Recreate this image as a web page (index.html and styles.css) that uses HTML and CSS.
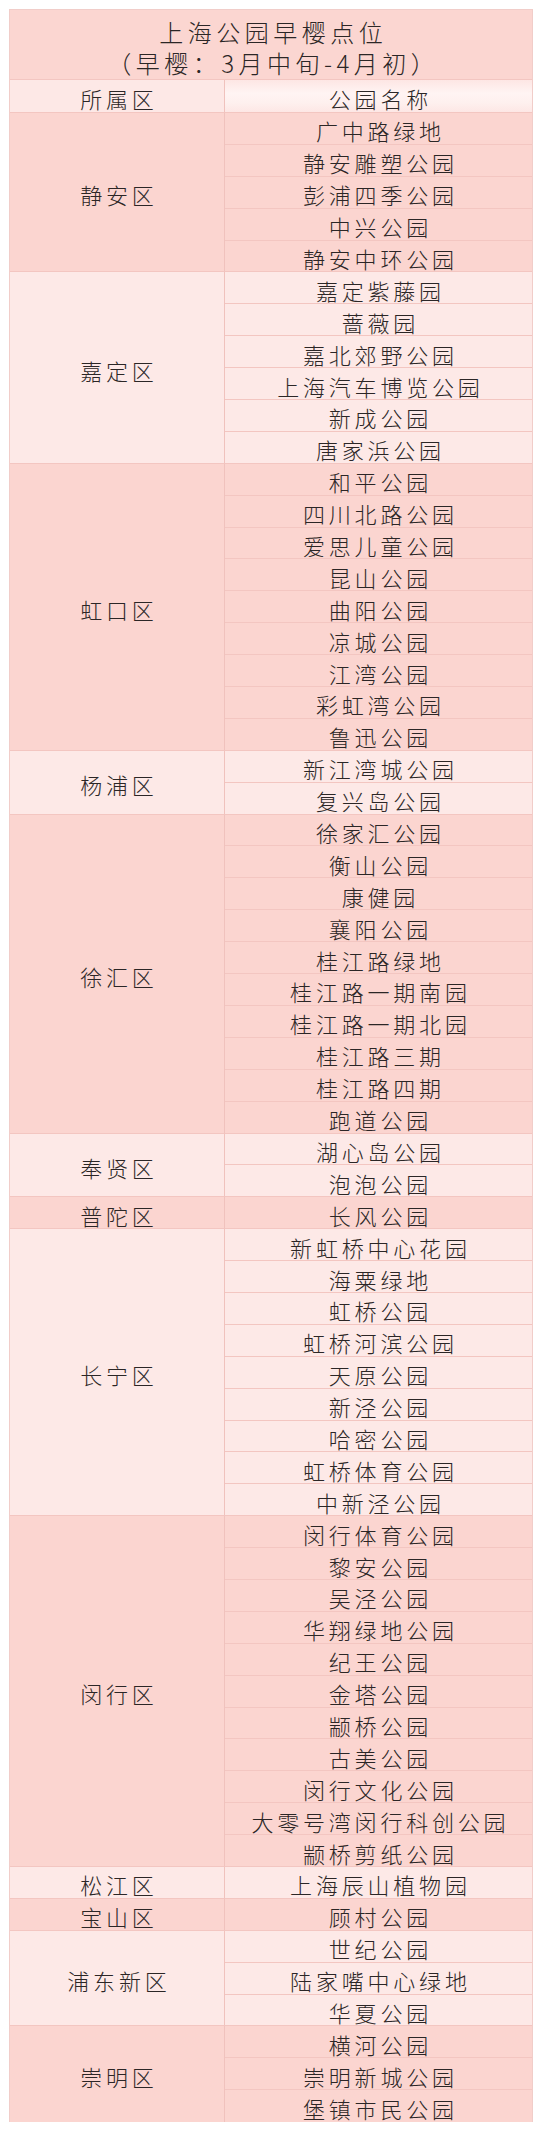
FILE: index.html
```html
<!DOCTYPE html>
<html lang="zh-CN">
<head>
<meta charset="utf-8">
<title>上海公园早樱点位</title>
<link rel="stylesheet" href="styles.css">
</head>
<body>
<div class="sheet">
  <div class="title">
    <div class="title-line">上海公园早樱点位</div>
    <div class="title-line">（早樱：3月中旬-4月初）</div>
  </div>
  <div class="head">
    <div class="district">所属区</div>
    <div class="parks"><div class="park">公园名称</div></div>
  </div>

  <div class="group dark">
    <div class="district">静安区</div>
    <div class="parks">
      <div class="park">广中路绿地</div>
      <div class="park">静安雕塑公园</div>
      <div class="park">彭浦四季公园</div>
      <div class="park">中兴公园</div>
      <div class="park">静安中环公园</div>
    </div>
  </div>

  <div class="group light">
    <div class="district">嘉定区</div>
    <div class="parks">
      <div class="park">嘉定紫藤园</div>
      <div class="park">蔷薇园</div>
      <div class="park">嘉北郊野公园</div>
      <div class="park">上海汽车博览公园</div>
      <div class="park">新成公园</div>
      <div class="park">唐家浜公园</div>
    </div>
  </div>

  <div class="group dark">
    <div class="district">虹口区</div>
    <div class="parks">
      <div class="park">和平公园</div>
      <div class="park">四川北路公园</div>
      <div class="park">爱思儿童公园</div>
      <div class="park">昆山公园</div>
      <div class="park">曲阳公园</div>
      <div class="park">凉城公园</div>
      <div class="park">江湾公园</div>
      <div class="park">彩虹湾公园</div>
      <div class="park">鲁迅公园</div>
    </div>
  </div>

  <div class="group light">
    <div class="district">杨浦区</div>
    <div class="parks">
      <div class="park">新江湾城公园</div>
      <div class="park">复兴岛公园</div>
    </div>
  </div>

  <div class="group dark">
    <div class="district">徐汇区</div>
    <div class="parks">
      <div class="park">徐家汇公园</div>
      <div class="park">衡山公园</div>
      <div class="park">康健园</div>
      <div class="park">襄阳公园</div>
      <div class="park">桂江路绿地</div>
      <div class="park">桂江路一期南园</div>
      <div class="park">桂江路一期北园</div>
      <div class="park">桂江路三期</div>
      <div class="park">桂江路四期</div>
      <div class="park">跑道公园</div>
    </div>
  </div>

  <div class="group light">
    <div class="district">奉贤区</div>
    <div class="parks">
      <div class="park">湖心岛公园</div>
      <div class="park">泡泡公园</div>
    </div>
  </div>

  <div class="group dark">
    <div class="district">普陀区</div>
    <div class="parks">
      <div class="park">长风公园</div>
    </div>
  </div>

  <div class="group light">
    <div class="district">长宁区</div>
    <div class="parks">
      <div class="park">新虹桥中心花园</div>
      <div class="park">海粟绿地</div>
      <div class="park">虹桥公园</div>
      <div class="park">虹桥河滨公园</div>
      <div class="park">天原公园</div>
      <div class="park">新泾公园</div>
      <div class="park">哈密公园</div>
      <div class="park">虹桥体育公园</div>
      <div class="park">中新泾公园</div>
    </div>
  </div>

  <div class="group dark">
    <div class="district">闵行区</div>
    <div class="parks">
      <div class="park">闵行体育公园</div>
      <div class="park">黎安公园</div>
      <div class="park">吴泾公园</div>
      <div class="park">华翔绿地公园</div>
      <div class="park">纪王公园</div>
      <div class="park">金塔公园</div>
      <div class="park">颛桥公园</div>
      <div class="park">古美公园</div>
      <div class="park">闵行文化公园</div>
      <div class="park">大零号湾闵行科创公园</div>
      <div class="park">颛桥剪纸公园</div>
    </div>
  </div>

  <div class="group light">
    <div class="district">松江区</div>
    <div class="parks">
      <div class="park">上海辰山植物园</div>
    </div>
  </div>

  <div class="group dark">
    <div class="district">宝山区</div>
    <div class="parks">
      <div class="park">顾村公园</div>
    </div>
  </div>

  <div class="group light">
    <div class="district">浦东新区</div>
    <div class="parks">
      <div class="park">世纪公园</div>
      <div class="park">陆家嘴中心绿地</div>
      <div class="park">华夏公园</div>
    </div>
  </div>

  <div class="group dark last">
    <div class="district">崇明区</div>
    <div class="parks">
      <div class="park">横河公园</div>
      <div class="park">崇明新城公园</div>
      <div class="park">堡镇市民公园</div>
    </div>
  </div>
</div>
</body>
</html>
```

FILE: styles.css
```css
html, body {
  margin: 0;
  padding: 0;
  background: #ffffff;
}

body {
  font-family: "Noto Sans CJK SC", "Noto Sans", sans-serif;
  color: #2b2626;
  font-weight: 300;
}

.sheet {
  margin: 9px 0 0 9px;
  width: 524px;
  border-left: 1px solid #f1cdc9;
  border-right: 1px solid #f1cdc9;
  border-top: 1px solid #f1cdc9;
  box-sizing: border-box;
}

.title {
  height: 70px;
  background: #fbd6d1;
  padding-top: 6px;
  box-sizing: border-box;
  border-bottom: 1px solid #f3c6c1;
  display: flex;
  flex-direction: column;
  align-items: center;
}

.title-line {
  font-size: 24px;
  line-height: 31px;
  letter-spacing: 4.5px;
  padding-left: 4.5px;
  white-space: nowrap;
}

.head {
  display: flex;
  height: 33px;
  background: #fde8e6;
}

.head .district {
  border-bottom: 1px solid #f3c6c1;
}

.head .parks {
  background: linear-gradient(#fde6e4, #fff4f3 40%, #fef0ee 70%, #fde6e4);
}

.head .park {
  height: 33px;
}

.group {
  display: flex;
}

.dark {
  background: #fbd5d0;
}

.light {
  background: #fde9e7;
}

.district {
  width: 215px;
  flex: none;
  border-right: 1px solid #f0c2bd;
  border-bottom: 1px solid #f3c6c1;
  display: flex;
  align-items: center;
  justify-content: center;
  font-size: 22px;
  line-height: 24px;
  letter-spacing: 3.8px;
  padding-left: 3.8px;
  padding-top: 4px;
  box-sizing: border-box;
  white-space: nowrap;
}

.parks {
  flex: 1;
  display: flex;
  flex-direction: column;
}

.park {
  height: 31.9px;
  box-sizing: border-box;
  border-bottom: 1px solid #f3c6c1;
  display: flex;
  align-items: center;
  justify-content: center;
  font-size: 22px;
  line-height: 24px;
  letter-spacing: 3.8px;
  padding-left: 3.8px;
  padding-top: 4px;
  white-space: nowrap;
}

.last .district,
.last .park:last-child {
  border-bottom: none;
}
```
